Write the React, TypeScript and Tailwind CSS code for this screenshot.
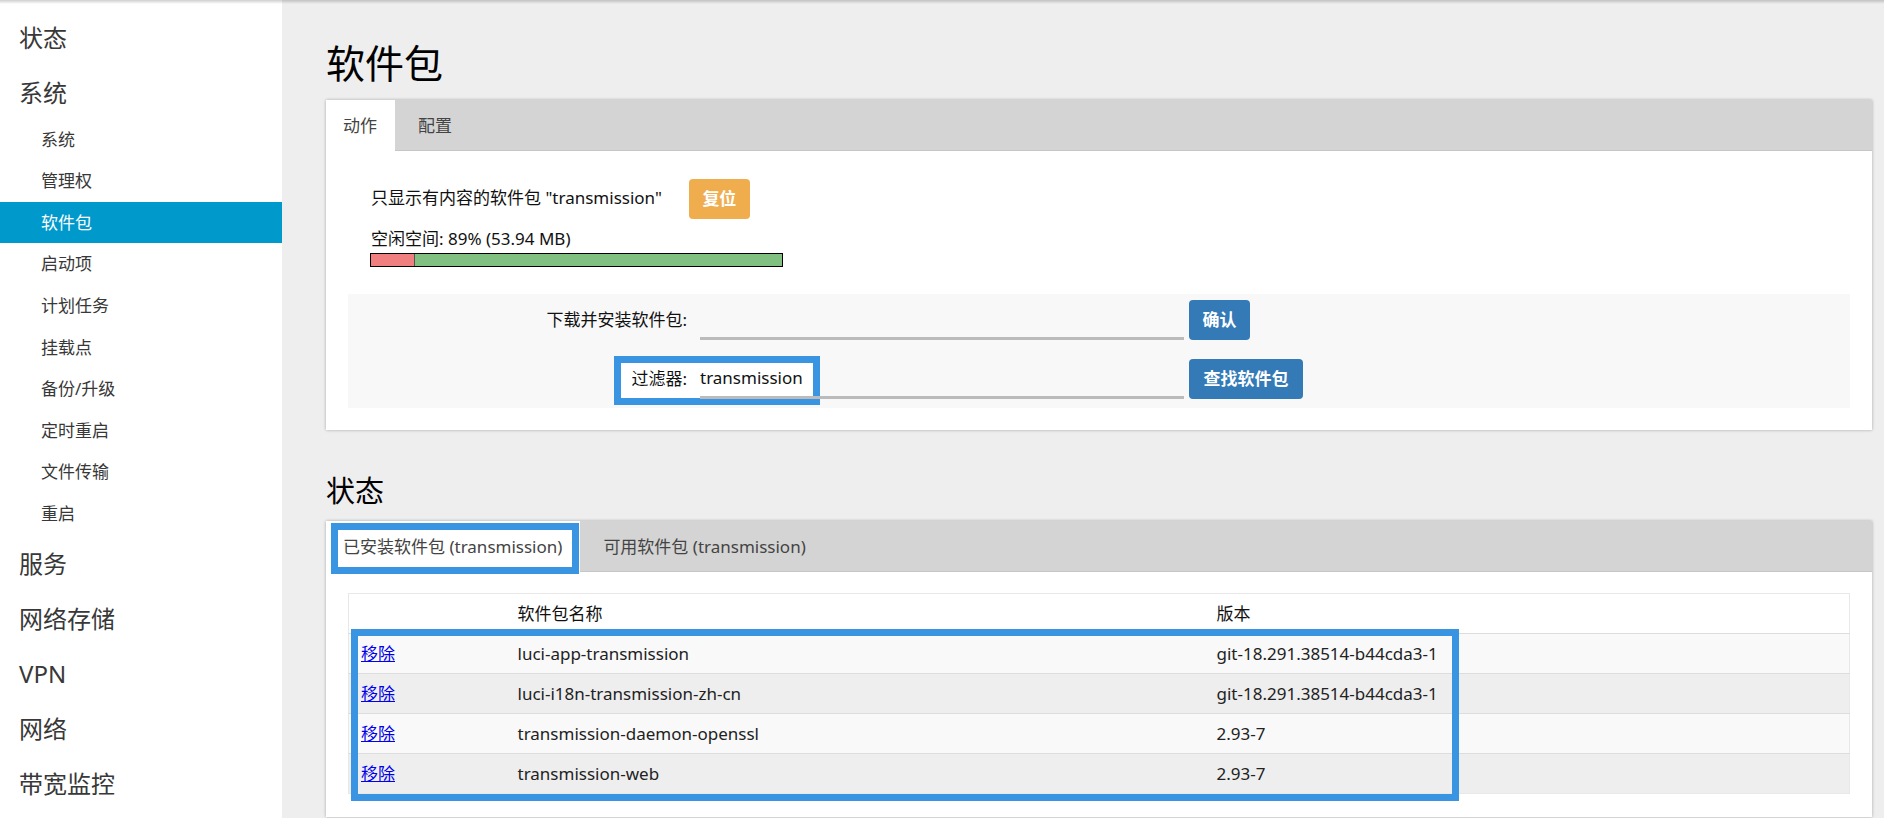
import React from 'react';

const subItems = ['系统', '管理权', '软件包', '启动项', '计划任务', '挂载点', '备份/升级', '定时重启', '文件传输', '重启'];
const bottomItems = ['服务', '网络存储', 'VPN', '网络', '带宽监控'];

const packages = [
  { name: 'luci-app-transmission', version: 'git-18.291.38514-b44cda3-1' },
  { name: 'luci-i18n-transmission-zh-cn', version: 'git-18.291.38514-b44cda3-1' },
  { name: 'transmission-daemon-openssl', version: '2.93-7' },
  { name: 'transmission-web', version: '2.93-7' },
];

function Sidebar() {
  return (
    <aside className="w-[282px] shrink-0 bg-white pt-[10.5px] text-[#383838]">
      <div className="h-[55px] flex items-center pl-[19px] text-[24px]">状态</div>
      <div className="h-[55px] flex items-center pl-[19px] text-[24px]">系统</div>
      <div className="-mt-[2px] mb-[2px]">
        {subItems.map((item) => (
          <div
            key={item}
            className={`h-[41.6px] flex items-center pl-[41px] text-[17px] ${
              item === '软件包' ? 'bg-[#0099cc] text-white' : ''
            }`}
          >
            {item}
          </div>
        ))}
      </div>
      {bottomItems.map((item) => (
        <div key={item} className="h-[55px] flex items-center pl-[19px] text-[24px]">
          {item}
        </div>
      ))}
    </aside>
  );
}

function TabBar({ tabs }: { tabs: string[] }) {
  return (
    <div className="h-[51px] flex bg-[#d4d4d4] shadow-[inset_0_-1px_0_#c6c6c6] text-[17px] text-[#444]">
      {tabs.map((t, i) => (
        <div
          key={t}
          className={
            i === 0
              ? 'h-full flex items-center bg-white pl-[17px] pr-[18px]'
              : 'h-full flex items-center pl-[23px] pr-[18px]'
          }
        >
          {t}
        </div>
      ))}
    </div>
  );
}

export default function App() {
  return (
    <div className="relative flex h-screen w-full overflow-hidden bg-[#eeeeee] font-['Noto_Sans','Noto_Sans_CJK_SC',sans-serif]">
      {/* top header shadow */}
      <div className="absolute top-0 left-0 right-0 h-[4px] bg-linear-to-b from-[#00000030] to-transparent z-20" />

      <Sidebar />

      <main className="flex-1 min-w-0 pl-[44px] pr-[12px] pt-[34px] text-[#111]">
        <h1 className="h-[56px] flex items-center text-[39px] leading-none text-black mb-[10px]">软件包</h1>

        {/* Actions card */}
        <div className="bg-white shadow-[0_0_3px_rgba(0,0,0,0.3)]">
          <TabBar tabs={['动作', '配置']} />
          <div className="px-[22px] pt-[28px] pb-[22px] text-[17px]">
            <div className="pl-[23px]">
              <div className="flex items-center h-[40px]">
                <span className="-mt-[2px]">只显示有内容的软件包 "transmission"</span>
                <button className="ml-[27px] w-[61px] h-[40px] rounded-[4px] bg-[#f0ad4e] text-white font-bold">复位</button>
              </div>
              <div className="mt-[8px] leading-[24px]">空闲空间: 89% (53.94 MB)</div>
              <div className="mt-[2px] w-[413px] h-[14px] border border-black flex -ml-px">
                <div className="w-[44px] h-full bg-[#f08080] border-r border-[#555]" />
                <div className="flex-1 h-full bg-[#80c080]" />
              </div>
            </div>

            <div className="relative mt-[27px] bg-[#f8f8f8] pt-[6px] pb-[9px]">
              <div className="absolute left-[266px] top-[62px] w-[206px] h-[49px] bg-white border-[7px] border-[#3994e2]" />
              <div className="relative flex items-center h-[40px]">
                <div className="w-[339px] text-right">下载并安装软件包:</div>
                <div className="ml-[13px] w-[484px] h-[40px] border-b-[3px] border-[#bbbbbb]" />
                <button className="ml-[5px] w-[61px] h-[40px] rounded-[4px] bg-[#337ab7] text-white font-bold">确认</button>
              </div>
              <div className="relative flex items-center h-[40px] mt-[19px]">
                <div className="w-[339px] text-right">过滤器:</div>
                <div className="ml-[13px] w-[484px] h-[40px] border-b-[3px] border-[#bbbbbb] flex items-center">
                  transmission
                </div>
                <button className="ml-[5px] w-[114px] h-[40px] rounded-[4px] bg-[#337ab7] text-white font-bold">查找软件包</button>
              </div>
            </div>
          </div>
        </div>

        <h2 className="mt-[40px] h-[40px] flex items-center text-[29px] leading-none text-black mb-[11px]">状态</h2>

        {/* Status card */}
        <div className="relative bg-white shadow-[0_0_3px_rgba(0,0,0,0.3)]">
          <TabBar tabs={['已安装软件包 (transmission)', '可用软件包 (transmission)']} />
          <div className="px-[22px] pt-[21px] pb-[23px] text-[17px] text-[#222]">
            <table className="w-full table-fixed border-collapse border border-[#e8e8e8]">
              <colgroup>
                <col className="w-[157px]" />
                <col className="w-[699px]" />
                <col />
              </colgroup>
              <thead>
                <tr className="h-[40px] bg-white text-[#111]">
                  <th className="pl-[12px] text-left font-normal" />
                  <th className="pl-[12px] text-left font-normal">软件包名称</th>
                  <th className="pl-[12px] text-left font-normal">版本</th>
                </tr>
              </thead>
              <tbody>
                {packages.map((p, i) => (
                  <tr
                    key={p.name}
                    className={`h-[40px] border-t border-[#dddddd] ${i % 2 === 0 ? 'bg-[#f9f9f9]' : 'bg-[#eeeeee]'}`}
                  >
                    <td className="pl-[12px]">
                      <a href="#" className="text-[#0000ee] underline">移除</a>
                    </td>
                    <td className="pl-[12px]">{p.name}</td>
                    <td className="pl-[12px]">{p.version}</td>
                  </tr>
                ))}
              </tbody>
            </table>
          </div>

          {/* annotation boxes */}
          <div className="absolute left-[5px] top-[2px] w-[248px] h-[51px] border-[7px] border-[#3994e2] pointer-events-none" />
          <div className="absolute left-[25px] top-[108px] w-[1108px] h-[172px] border-[7px] border-[#3994e2] pointer-events-none" />
        </div>
      </main>
    </div>
  );
}
